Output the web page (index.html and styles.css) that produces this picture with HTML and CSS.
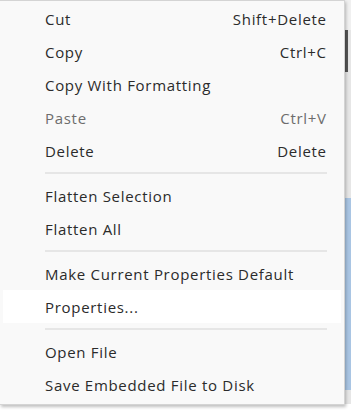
FILE: index.html
```html
<!DOCTYPE html>
<html>
<head>
<meta charset="utf-8">
<link rel="stylesheet" href="styles.css">
</head>
<body>
<div class="backdrop">
  <div class="strip-top"></div>
  <div class="strip-thumb"></div>
  <div class="strip-blue"></div>
</div>
<div class="menu">
  <div class="item"><span class="label">Cut</span><span class="key">Shift+Delete</span></div>
  <div class="item"><span class="label">Copy</span><span class="key">Ctrl+C</span></div>
  <div class="item"><span class="label">Copy With Formatting</span></div>
  <div class="item disabled"><span class="label">Paste</span><span class="key">Ctrl+V</span></div>
  <div class="item"><span class="label">Delete</span><span class="key">Delete</span></div>
  <div class="sep"></div>
  <div class="item"><span class="label">Flatten Selection</span></div>
  <div class="item"><span class="label">Flatten All</span></div>
  <div class="sep"></div>
  <div class="item"><span class="label">Make Current Properties Default</span></div>
  <div class="item hover"><span class="label">Properties...</span></div>
  <div class="sep"></div>
  <div class="item"><span class="label">Open File</span></div>
  <div class="item"><span class="label">Save Embedded File to Disk</span></div>
</div>
</body>
</html>
```

FILE: styles.css
```css
html, body {
  margin: 0;
  padding: 0;
  width: 351px;
  height: 414px;
  overflow: hidden;
  background: #ffffff;
  font-family: "Open Sans", "Noto Sans", sans-serif;
}
body { position: relative; }

.backdrop {
  position: absolute;
  left: 345px;
  top: 0;
  width: 6px;
  height: 404px;
  background: #e6e6e6;
}
.strip-top { height: 30px; background: #f0f0f0; }
.strip-thumb { height: 42px; width: 3px; background: #555; }
.strip-blue {
  position: absolute;
  top: 198px;
  left: 0;
  width: 6px;
  height: 192px;
  background: #a9c5e3;
}

.menu {
  position: relative;
  width: 338px;
  margin-left: 0;
  background: #f9f9f9;
  border: 1px solid #d4d4d4;
  border-left: none;
  padding: 1px 3px 3px 3px;
  box-shadow: 1px 2px 3px rgba(0,0,0,0.25);
}

.item {
  display: flex;
  align-items: center;
  justify-content: space-between;
  height: 33px;
  padding: 0 15px 0 42px;
  font-size: 15px;
  letter-spacing: 0.7px;
  color: #2b2b2b;
}
.item.disabled { color: #6d6d6d; }
.item.hover { background: #ffffff; }
.key { text-align: right; margin-right: -0.7px; }

.sep {
  height: 12px;
  display: flex;
  align-items: center;
  padding: 0 14px 0 42px;
}
.sep::before {
  content: "";
  flex: 1;
  height: 2px;
  background: #e6e6e6;
}
```
